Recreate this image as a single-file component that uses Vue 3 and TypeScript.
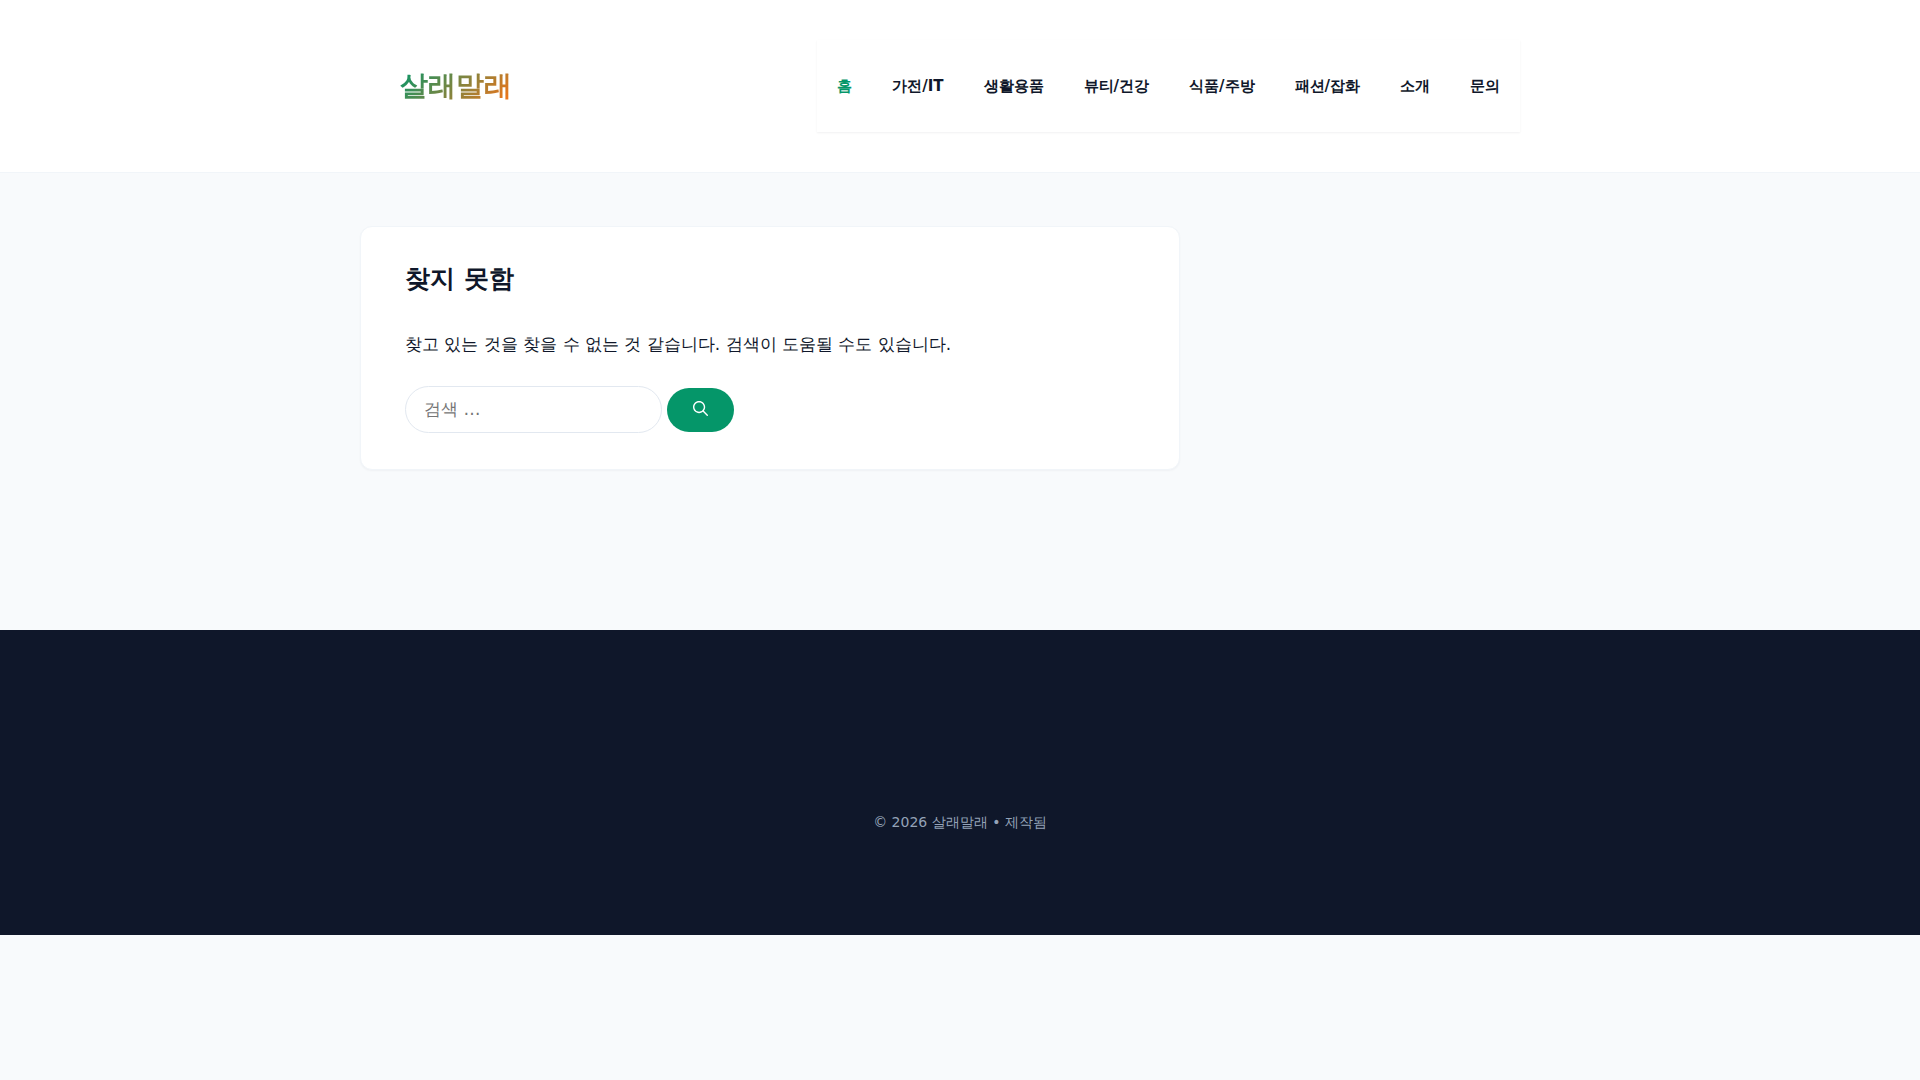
<script setup lang="ts">
import { ref } from 'vue'

interface MenuItem {
  label: string
  current?: boolean
}

const menu: MenuItem[] = [
  { label: '홈', current: true },
  { label: '가전/IT' },
  { label: '생활용품' },
  { label: '뷰티/건강' },
  { label: '식품/주방' },
  { label: '패션/잡화' },
  { label: '소개' },
  { label: '문의' },
]

const query = ref('')
</script>

<template>
  <div class="page">
    <header class="site-header">
      <div class="container header-inner">
        <a class="logo" href="#">살래말래</a>
        <nav class="main-nav" aria-label="메뉴">
          <a
            v-for="item in menu"
            :key="item.label"
            href="#"
            :class="{ current: item.current }"
            :aria-current="item.current ? 'page' : undefined"
          >{{ item.label }}</a>
        </nav>
      </div>
    </header>

    <div class="container content">
      <main class="card">
        <h1>찾지 못함</h1>
        <p>찾고 있는 것을 찾을 수 없는 것 같습니다. 검색이 도움될 수도 있습니다.</p>
        <form class="search" role="search" @submit.prevent>
          <input v-model="query" type="search" placeholder="검색 …" aria-label="검색" />
          <button type="submit" aria-label="검색">
            <svg viewBox="0 0 512 512" width="15" height="15" aria-hidden="true">
              <path
                fill="currentColor"
                fill-rule="evenodd"
                clip-rule="evenodd"
                d="M208 48c-88.366 0-160 71.634-160 160s71.634 160 160 160 160-71.634 160-160S296.366 48 208 48zM0 208C0 93.125 93.125 0 208 0s208 93.125 208 208c0 48.741-16.765 93.566-44.843 129.024l133.826 134.018c9.366 9.379 9.355 24.575-.025 33.941-9.379 9.366-24.575 9.355-33.941-.025L337.238 370.987C301.747 399.167 256.839 416 208 416 93.125 416 0 322.875 0 208z"
              />
            </svg>
          </button>
        </form>
      </main>
    </div>

    <footer class="site-footer">
      <p>© 2026 살래말래 • 제작됨</p>
    </footer>
  </div>
</template>

<style>
body {
  margin: 0;
  background: #f8fafc;
}
</style>

<style scoped>
.page {
  color: #0f172a;
  font-family: 'DejaVu Sans', sans-serif;
  font-size: 17px;
  line-height: 28px;
}

.container {
  box-sizing: border-box;
  max-width: 1200px;
  margin: 0 auto;
}

.site-header {
  background: #fff;
  border-bottom: 1px solid #f1f5f9;
}

.header-inner {
  display: flex;
  align-items: center;
  justify-content: space-between;
  padding: 40px;
}

.logo {
  font-size: 28px;
  font-weight: 800;
  line-height: 32px;
  text-decoration: none;
  color: transparent;
  background: linear-gradient(135deg, #059669, #f97316);
  background-clip: text;
  -webkit-background-clip: text;
}

.main-nav {
  display: flex;
  box-shadow: 0 1px 2px rgba(15, 23, 42, 0.06);
}

.main-nav a {
  padding: 0 20px;
  font-size: 15px;
  font-weight: 600;
  line-height: 92px;
  color: #0f172a;
  text-decoration: none;
}

.main-nav a.current {
  color: #059669;
}

.content {
  display: grid;
  grid-template-columns: 7fr 3fr;
  padding: 53px 0 160px;
}

.card {
  margin-right: 20px;
  padding: 32px 44px 36px;
  background: #fff;
  border: 1px solid #f1f5f9;
  border-radius: 12px;
  box-shadow: 0 1px 2px rgba(15, 23, 42, 0.04);
}

.card h1 {
  margin: 0 0 31px;
  font-size: 25px;
  font-weight: 700;
  line-height: 40px;
}

.card p {
  margin: 0 0 28px;
}

.search {
  display: flex;
  align-items: center;
  gap: 5px;
}

.search input {
  box-sizing: border-box;
  width: 257px;
  height: 47px;
  padding: 0 18px 2px;
  font: inherit;
  color: #0f172a;
  background: #fff;
  border: 1px solid #e2e8f0;
  border-radius: 24px;
  appearance: none;
  outline: none;
}

.search input::placeholder {
  color: #757575;
}

.search button {
  display: flex;
  align-items: center;
  justify-content: center;
  width: 67px;
  height: 44px;
  padding: 0 0 2px;
  color: #fff;
  background: #059669;
  border: 0;
  border-radius: 24px;
  cursor: pointer;
}

.site-footer {
  padding: 180px 40px 101px;
  text-align: center;
  color: #94a3b8;
  background: #0f172a;
}

.site-footer p {
  margin: 0;
  font-size: 14px;
  line-height: 24px;
}
</style>
